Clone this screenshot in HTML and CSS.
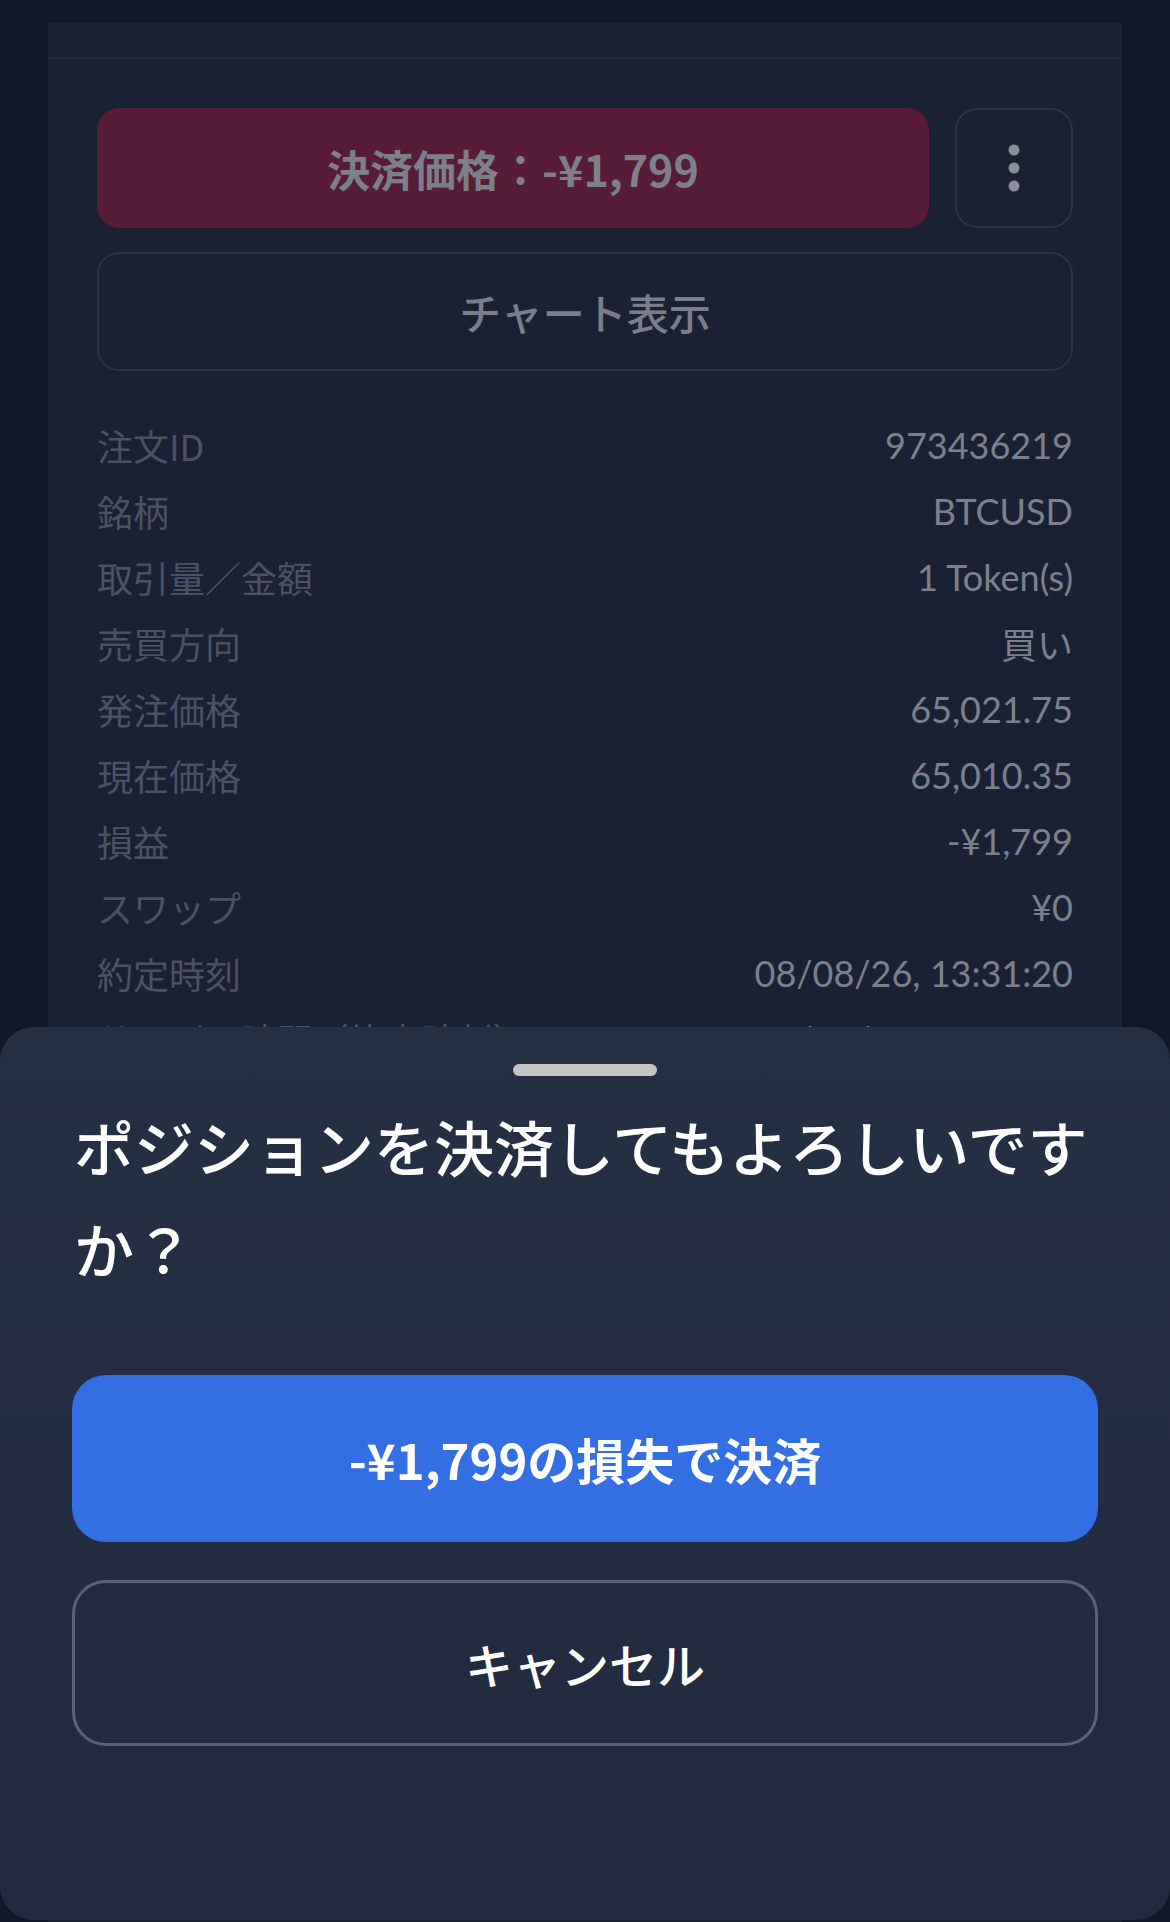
FILE: index.html
```html
<!DOCTYPE html>
<html lang="ja">
<head>
<meta charset="utf-8">
<title>ポジション決済</title>
<link rel="stylesheet" href="styles.css">
</head>
<body>
<div class="page">
  <div class="panel">
    <div class="panel-head"></div>
    <div class="panel-body">
      <div class="actions">
        <button class="btn-close-price">決済価格：-¥1,799</button>
        <button class="btn-more" aria-label="more">
          <svg width="14" height="50" viewBox="0 0 14 50"><circle cx="7" cy="7" r="5.5" fill="#8a8d97"/><circle cx="7" cy="25" r="5.5" fill="#8a8d97"/><circle cx="7" cy="43" r="5.5" fill="#8a8d97"/></svg>
        </button>
      </div>
      <button class="btn-chart">チャート表示</button>
      <div class="details">
        <div class="row"><span class="label">注文ID</span><span class="value">973436219</span></div>
        <div class="row"><span class="label">銘柄</span><span class="value">BTCUSD</span></div>
        <div class="row"><span class="label">取引量／金額</span><span class="value">1 Token(s)</span></div>
        <div class="row"><span class="label">売買方向</span><span class="value">買い</span></div>
        <div class="row"><span class="label">発注価格</span><span class="value">65,021.75</span></div>
        <div class="row"><span class="label">現在価格</span><span class="value">65,010.35</span></div>
        <div class="row"><span class="label">損益</span><span class="value">-¥1,799</span></div>
        <div class="row"><span class="label">スワップ</span><span class="value">¥0</span></div>
        <div class="row"><span class="label">約定時刻</span><span class="value">08/08/26, 13:31:20</span></div>
        <div class="row"><span class="label">サーバー時間（約定時刻）</span><span class="value">08/08/26, 07:31:20</span></div>
      </div>
    </div>
  </div>
</div>

<div class="sheet">
  <div class="handle"></div>
  <h2 class="sheet-title">ポジションを決済してもよろしいですか？</h2>
  <button class="btn-confirm">-¥1,799の損失で決済</button>
  <button class="btn-cancel">キャンセル</button>
</div>
</body>
</html>
```

FILE: styles.css
```css
* { box-sizing: border-box; }

html, body {
  margin: 0;
  padding: 0;
  background: #111728;
  height: 1922px;
  overflow: hidden;
}

body {
  font-family: "Noto Sans CJK JP", "Noto Sans", sans-serif;
}

button {
  font-family: inherit;
  cursor: pointer;
  margin: 0;
}

.page {
  padding: 23px 48px 0 48px;
}

.panel {
  background: #1a2134;
  min-height: 1899px;
}

.panel-head {
  height: 36px;
  border-bottom: 2px solid #232a3d;
}

.panel-body {
  padding: 49px 49px 0 49px;
}

.actions {
  display: flex;
  gap: 26px;
}

.btn-close-price {
  flex: 1;
  height: 120px;
  border: none;
  border-radius: 22px;
  background: #571c37;
  color: #7d7f8b;
  font-size: 43px;
  font-weight: 700;
}

.btn-more {
  width: 118px;
  height: 120px;
  border: 2px solid #2b3245;
  border-radius: 22px;
  background: transparent;
  display: flex;
  align-items: center;
  justify-content: center;
  padding: 0;
}

.btn-chart {
  display: block;
  width: 100%;
  height: 119px;
  margin-top: 24px;
  border: 2px solid #2b3245;
  border-radius: 22px;
  background: transparent;
  color: #7a7e8a;
  font-size: 42px;
  font-weight: 500;
}

.details {
  margin-top: 41px;
}

.row {
  display: flex;
  justify-content: space-between;
  align-items: center;
  height: 66px;
}

.label {
  color: #4b5264;
  font-size: 36px;
  font-weight: 400;
}

.value {
  color: #7b808c;
  font-family: "Lato", "Noto Sans CJK JP", sans-serif;
  font-size: 36px;
  font-weight: 400;
}

.sheet {
  position: fixed;
  left: 0;
  right: 0;
  top: 1027px;
  height: 893px;
  border-radius: 34px;
  background: linear-gradient(180deg, #263045 0%, #232c40 50%, #212a3e 100%);
  padding: 37px 72px 0 72px;
}

.handle {
  width: 144px;
  height: 12px;
  border-radius: 6px;
  background: #c4c4c4;
  margin: 0 auto;
}

.sheet-title {
  margin: 19px 0 0 2px;
  color: #ffffff;
  font-size: 60px;
  font-weight: 500;
  line-height: 102px;
}

.btn-confirm {
  display: block;
  width: 100%;
  height: 167px;
  margin-top: 76px;
  border: none;
  border-radius: 34px;
  background: #346ee3;
  color: #ffffff;
  font-size: 49px;
  font-weight: 700;
}

.btn-cancel {
  display: block;
  width: 100%;
  height: 166px;
  margin-top: 38px;
  border: 3px solid #58627a;
  border-radius: 34px;
  background: transparent;
  color: #ffffff;
  font-size: 48px;
  font-weight: 500;
}
```
